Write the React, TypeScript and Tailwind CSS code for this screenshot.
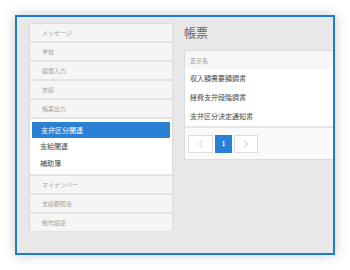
const font = { fontFamily: '"Noto Sans CJK JP", "Noto Sans", sans-serif' };

const topItems = ['メッセージ', '学校', '経費入力', '支給', '帳票出力'];
const subItems = ['支給関連', '補助簿'];
const bottomItems = ['マイナンバー', '支給額照会', '動作設定'];
const rows = ['収入額需要額調書', '経費支弁段階調書', '支弁区分決定通知書'];

function GrayItem({ label }: { label: string }) {
  return (
    <div className="flex h-[19px] items-center border-b-2 border-[#e3e3e3] bg-[#f5f5f5] pl-3 text-[6px] text-[#a3a3a3]">
      {label}
    </div>
  );
}

export default function App() {
  return (
    <div className="h-[270px] w-[350px] bg-white pl-[15px] pt-[15px]" style={font}>
      <div className="flex h-[240px] w-[320px] gap-[11px] overflow-hidden border-2 border-[#2179d0] bg-[#e8e8e8] pl-3 pt-[6px] shadow-[0_0_12px_rgba(0,0,0,0.22)]">
        {/* side menu */}
        <nav className="h-[207px] w-[144px] shrink-0 border border-[#dcdcdc] bg-white shadow-[0_1px_1px_rgba(0,0,0,0.08)]">
          {topItems.map((l) => (
            <GrayItem key={l} label={l} />
          ))}
          <div className="border-b-2 border-[#e3e3e3] bg-white px-[2px] pb-[2px] pt-[3px]">
            <div className="flex h-[16px] items-center rounded-[1px] bg-[#2a80d6] pl-[9px] text-[7px] text-white">
              支弁区分関連
            </div>
            {subItems.map((l) => (
              <div key={l} className="flex h-[17px] items-center pl-[8px] text-[7px] text-[#444]">
                {l}
              </div>
            ))}
          </div>
          {bottomItems.map((l) => (
            <GrayItem key={l} label={l} />
          ))}
        </nav>

        {/* content */}
        <div className="flex min-w-0 flex-col">
          <h1 className="h-[27px] pt-[1px] text-[12px] leading-[18px] text-[#666]">帳票</h1>
          <div className="w-[200px] border border-[#dcdcdc] bg-white">
            <div className="flex h-[18px] items-center bg-[#f6f6f6] pl-[5px] text-[6px] text-[#999]">表示名</div>
            {rows.map((r) => (
              <div key={r} className="flex h-[19px] items-center pl-[5px] text-[7px] text-[#444]">
                {r}
              </div>
            ))}
            <div className="flex h-[33px] items-center gap-[2px] border-t-2 border-[#e6e6e6] bg-[#fafafa] pl-[3px]">
              <button className="flex h-[18px] w-[25px] items-center justify-center border border-[#ddd] bg-white">
                <svg width="6" height="8" viewBox="0 0 6 8" fill="none" stroke="#c8c8c8" strokeWidth="1">
                  <path d="M4.5 0.5 1.5 4l3 3.5" />
                </svg>
              </button>
              <button className="flex h-[18px] w-[17px] items-center justify-center bg-[#2a80d6] text-[6px] font-bold text-white">
                1
              </button>
              <button className="flex h-[18px] w-[24px] items-center justify-center border border-[#ddd] bg-white">
                <svg width="6" height="8" viewBox="0 0 6 8" fill="none" stroke="#c8c8c8" strokeWidth="1">
                  <path d="M1.5 0.5 4.5 4l-3 3.5" />
                </svg>
              </button>
            </div>
          </div>
        </div>
      </div>
    </div>
  );
}
